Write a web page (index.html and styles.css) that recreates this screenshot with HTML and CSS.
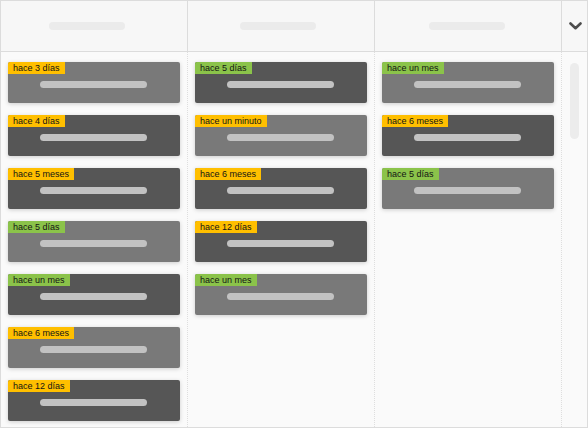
FILE: index.html
```html
<!DOCTYPE html>
<html lang="es">
<head>
<meta charset="utf-8">
<title>Tablero</title>
<link rel="stylesheet" href="styles.css">
</head>
<body>
<div class="board">
  <div class="header">
    <div class="hcell"><span class="hpill hpill-a"></span></div>
    <div class="hcell"><span class="hpill hpill-b"></span></div>
    <div class="hcell"><span class="hpill hpill-c"></span></div>
    <div class="hcell hcell-toggle">
      <svg class="chevron" width="13" height="8" viewBox="0 0 13 8"><path d="M1.5 1.5 L6.5 6.2 L11.5 1.5" fill="none" stroke="#4d4d4d" stroke-width="2.6" stroke-linecap="round" stroke-linejoin="round"/></svg>
    </div>
  </div>
  <div class="body">
    <div class="col">
      <div class="card light"><span class="tag yellow">hace 3 días</span><span class="bar"></span></div>
      <div class="card dark"><span class="tag yellow">hace 4 días</span><span class="bar"></span></div>
      <div class="card dark"><span class="tag yellow">hace 5 meses</span><span class="bar"></span></div>
      <div class="card light"><span class="tag green">hace 5 días</span><span class="bar"></span></div>
      <div class="card dark"><span class="tag green">hace un mes</span><span class="bar"></span></div>
      <div class="card light"><span class="tag yellow">hace 6 meses</span><span class="bar"></span></div>
      <div class="card dark"><span class="tag yellow">hace 12 días</span><span class="bar"></span></div>
    </div>
    <div class="col">
      <div class="card dark"><span class="tag green">hace 5 días</span><span class="bar"></span></div>
      <div class="card light"><span class="tag yellow">hace un minuto</span><span class="bar"></span></div>
      <div class="card dark"><span class="tag yellow">hace 6 meses</span><span class="bar"></span></div>
      <div class="card dark"><span class="tag yellow">hace 12 días</span><span class="bar"></span></div>
      <div class="card light"><span class="tag green">hace un mes</span><span class="bar"></span></div>
    </div>
    <div class="col">
      <div class="card light"><span class="tag green">hace un mes</span><span class="bar"></span></div>
      <div class="card dark"><span class="tag yellow">hace 6 meses</span><span class="bar"></span></div>
      <div class="card light"><span class="tag green">hace 5 días</span><span class="bar"></span></div>
    </div>
    <div class="scroll"><span class="thumb"></span></div>
  </div>
</div>
</body>
</html>
```
FILE: styles.css
```css
* { box-sizing: border-box; }
html, body { margin: 0; padding: 0; }
body {
  width: 588px;
  height: 428px;
  background: #ffffff;
  font-family: "Liberation Sans", Arial, sans-serif;
}
.board {
  width: 588px;
  height: 428px;
  border: 1px solid #dcdcdc;
  display: flex;
  flex-direction: column;
  overflow: hidden;
  background: #fafafa;
}
.header {
  height: 51px;
  flex: none;
  display: grid;
  grid-template-columns: 187px 187px 187px 25px;
  border-bottom: 1px solid #dcdcdc;
  background: #f7f7f7;
}
.hcell {
  border-right: 1px solid #dcdcdc;
  display: flex;
  align-items: center;
  justify-content: center;
}
.hcell-toggle { border-right: none; }
.hpill {
  display: block;
  width: 76px;
  height: 8px;
  border-radius: 4px;
  background: #ebebeb;
}
.hpill-a { margin-right: 14px; }
.hpill-b { margin-right: 6px; }
.hpill-c { margin-right: 2px; }
.chevron { display: block; margin-left: 1px; }
.body {
  flex: 1;
  min-height: 0;
  display: grid;
  grid-template-columns: 187px 187px 187px 25px;
  overflow: hidden;
}
.col {
  border-right: 1px dotted #dedede;
  padding: 10px 7px 0 7px;
  display: flex;
  flex-direction: column;
  gap: 12px;
  min-height: 0;
}
.card {
  flex: none;
  width: 172px;
  height: 41px;
  border-radius: 2px;
  box-shadow: 0 1px 4px rgba(0, 0, 0, 0.18);
  overflow: hidden;
  display: flex;
  flex-direction: column;
  align-items: flex-start;
}
.card.light { background: #797979; }
.card.dark { background: #565656; }
.tag {
  display: block;
  height: 12px;
  line-height: 12px;
  padding: 0 5px;
  font-size: 9px;
  color: #141414;
  white-space: nowrap;
}
.tag.yellow { background: #ffbf00; }
.tag.green { background: #8bc34a; }
.bar {
  display: block;
  align-self: center;
  width: 107px;
  height: 7px;
  margin-top: 7px;
  margin-right: 2px;
  border-radius: 4px;
  background: #c2c2c2;
}
.scroll {
  position: relative;
  padding: 11px 0 0 8px;
}
.thumb {
  display: block;
  width: 9px;
  height: 76px;
  border-radius: 5px;
  background: #ececec;
}
```
